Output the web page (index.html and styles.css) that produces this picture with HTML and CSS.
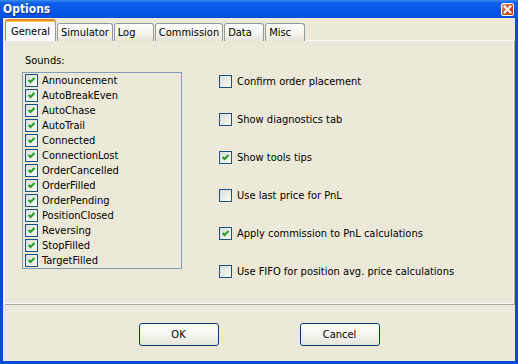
FILE: index.html
```html
<!DOCTYPE html>
<html lang="en">
<head>
  <meta charset="UTF-8" />
  <title>Options</title>
  <link rel="stylesheet" href="styles.css">
</head>
<body>

  <div class="window">
    <div class="titlebar">
      <span class="title">Options</span>
      <span class="close">
        <svg width="11" height="11" viewBox="0 0 11 11"><path d="M2.5 2.5 L8.5 8.5 M8.5 2.5 L2.5 8.5" stroke="#fff" stroke-width="2" stroke-linecap="square"/></svg>
      </span>
    </div>

    <div class="content">
      <div class="tabs">
        <div class="tab active">General</div>
        <div class="tab">Simulator</div>
        <div class="tab">Log</div>
        <div class="tab">Commission</div>
        <div class="tab">Data</div>
        <div class="tab">Misc</div>
      </div>

      <div class="panel">
        <div class="sounds">
          <div class="label">Sounds:</div>
          <div class="listbox">
            <div class="item"><span class="check"><svg viewBox="0 0 11 11"><path d="M2.5 5 L4.5 7 L8.5 3"/></svg></span>Announcement</div>
            <div class="item"><span class="check"><svg viewBox="0 0 11 11"><path d="M2.5 5 L4.5 7 L8.5 3"/></svg></span>AutoBreakEven</div>
            <div class="item"><span class="check"><svg viewBox="0 0 11 11"><path d="M2.5 5 L4.5 7 L8.5 3"/></svg></span>AutoChase</div>
            <div class="item"><span class="check"><svg viewBox="0 0 11 11"><path d="M2.5 5 L4.5 7 L8.5 3"/></svg></span>AutoTrail</div>
            <div class="item"><span class="check"><svg viewBox="0 0 11 11"><path d="M2.5 5 L4.5 7 L8.5 3"/></svg></span>Connected</div>
            <div class="item"><span class="check"><svg viewBox="0 0 11 11"><path d="M2.5 5 L4.5 7 L8.5 3"/></svg></span>ConnectionLost</div>
            <div class="item"><span class="check"><svg viewBox="0 0 11 11"><path d="M2.5 5 L4.5 7 L8.5 3"/></svg></span>OrderCancelled</div>
            <div class="item"><span class="check"><svg viewBox="0 0 11 11"><path d="M2.5 5 L4.5 7 L8.5 3"/></svg></span>OrderFilled</div>
            <div class="item"><span class="check"><svg viewBox="0 0 11 11"><path d="M2.5 5 L4.5 7 L8.5 3"/></svg></span>OrderPending</div>
            <div class="item"><span class="check"><svg viewBox="0 0 11 11"><path d="M2.5 5 L4.5 7 L8.5 3"/></svg></span>PositionClosed</div>
            <div class="item"><span class="check"><svg viewBox="0 0 11 11"><path d="M2.5 5 L4.5 7 L8.5 3"/></svg></span>Reversing</div>
            <div class="item"><span class="check"><svg viewBox="0 0 11 11"><path d="M2.5 5 L4.5 7 L8.5 3"/></svg></span>StopFilled</div>
            <div class="item"><span class="check"><svg viewBox="0 0 11 11"><path d="M2.5 5 L4.5 7 L8.5 3"/></svg></span>TargetFilled</div>
          </div>
        </div>

        <div class="options">
          <div class="option"><span class="check"></span>Confirm order placement</div>
          <div class="option"><span class="check"></span>Show diagnostics tab</div>
          <div class="option"><span class="check"><svg viewBox="0 0 11 11"><path d="M2.5 5 L4.5 7 L8.5 3"/></svg></span>Show tools tips</div>
          <div class="option"><span class="check"></span>Use last price for PnL</div>
          <div class="option"><span class="check"><svg viewBox="0 0 11 11"><path d="M2.5 5 L4.5 7 L8.5 3"/></svg></span>Apply commission to PnL calculations</div>
          <div class="option"><span class="check"></span>Use FIFO for position avg. price calculations</div>
        </div>
      </div>

      <div class="buttons">
        <button>OK</button>
        <button>Cancel</button>
      </div>
    </div>
  </div>

</body>
</html>
```

FILE: styles.css
```css
body {
  margin: 0;
  font-family: "DejaVu Sans Condensed", "DejaVu Sans", sans-serif;
  font-stretch: condensed;
  font-size: 11px;
  color: #000;
}
.window {
  width: 518px;
  height: 364px;
  background: #0b4bdb;
  display: flex;
  flex-direction: column;
  box-sizing: border-box;
}
.titlebar {
  height: 18px;
  flex: none;
  display: flex;
  align-items: center;
  justify-content: space-between;
  padding: 0 4px 0 3px;
  background: linear-gradient(to bottom, #3a8cf8 0, #0e5fe9 3px, #0557e6 55%, #0450dc 100%);
}
.title {
  color: #fff;
  font-weight: bold;
  font-size: 12px;
  text-shadow: 1px 1px 0 #0a3296;
}
.close {
  width: 13px;
  height: 13px;
  box-sizing: border-box;
  border: 1px solid #fff;
  border-radius: 2px;
  background: linear-gradient(135deg, #f0896a, #d6451c 60%, #c53a12);
  display: flex;
  align-items: center;
  justify-content: center;
  margin-top: 1px;
}
.close svg {
  display: block;
}
.content {
  flex: 1;
  margin: 0 3px 3px 3px;
  background: #ece9d8;
  display: flex;
  flex-direction: column;
}
.tabs {
  display: flex;
  height: 22px;
  margin: 1px 0 -1px 2px;
  position: relative;
  z-index: 1;
}
.tab {
  height: 18px;
  margin-top: 4px;
  min-width: 40px;
  box-sizing: border-box;
  padding: 2px 3px 0 3px;
  margin-right: 1px;
  border: 1px solid #919b9c;
  border-bottom: none;
  border-radius: 3px 3px 0 0;
  background: linear-gradient(to bottom, #fff, #f3f2ec 60%, #e4e2d8);
}
.tab.active {
  height: 22px;
  margin-top: 0;
  padding: 4px 5px 0 5px;
  background: #fcfcfe;
  border-top: 2px solid #e68b2c;
  box-shadow: inset 0 1px 0 #ffc83c;
}
.panel {
  height: 264px;
  margin: 0 1px;
  box-sizing: border-box;
  border: 1px solid #fbfbf9;
  box-shadow: 1px 1px 0 #a7a6a0;
  background: #ece9d8;
  display: flex;
  padding: 13px 0 0 17px;
}
.label {
  height: 13px;
  line-height: 13px;
  margin-bottom: 5px;
  padding-left: 3px;
}
.listbox {
  width: 160px;
  height: 197px;
  box-sizing: border-box;
  border: 1px solid #7f9db9;
  background: #ece9d8;
}
.item {
  height: 15px;
  display: flex;
  align-items: center;
  gap: 4px;
  padding-left: 2px;
}
.check {
  width: 13px;
  height: 13px;
  flex: none;
  box-sizing: border-box;
  border: 1px solid #1c5180;
  background: linear-gradient(135deg, #dcdcd7, #fbfbf9);
}
.check svg {
  display: block;
  width: 11px;
  height: 11px;
  fill: none;
  stroke: #21a121;
  stroke-width: 2;
}
.options {
  margin-left: 37px;
  padding-top: 20px;
  display: flex;
  flex-direction: column;
  gap: 23px;
}
.option {
  height: 15px;
  display: flex;
  align-items: center;
  gap: 5px;
}
.buttons {
  display: flex;
  justify-content: center;
  gap: 81px;
  margin-top: 19px;
}
button {
  width: 80px;
  height: 23px;
  font-family: inherit;
  font-stretch: condensed;
  font-size: 11px;
  border: 1px solid #003c74;
  border-radius: 3px;
  background: linear-gradient(to bottom, #fff, #f4f4f0 50%, #e6e5dc);
  padding: 0;
}
```
